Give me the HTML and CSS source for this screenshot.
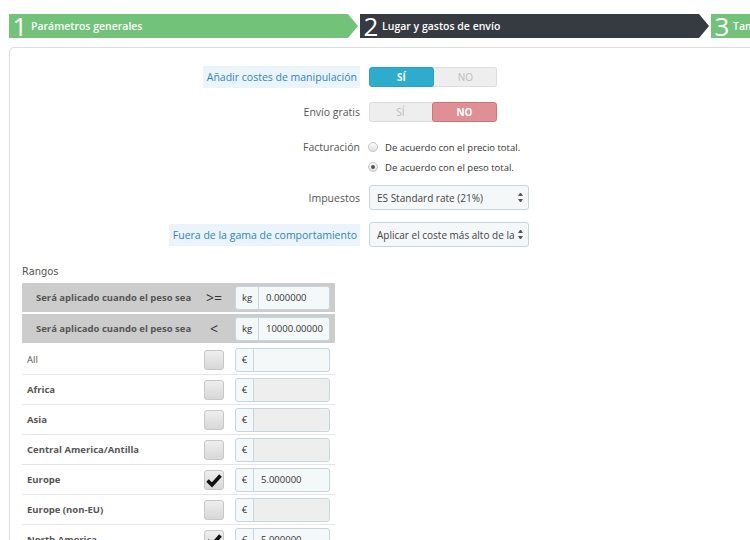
FILE: index.html
```html
<!DOCTYPE html>
<html lang="es">

<head>
    <meta charset="UTF-8">
    <meta name="viewport" content="width=device-width, initial-scale=1.0">
    <title>Transportista</title>
    <link rel="stylesheet" href="styles.css">
</head>

<body>
    <div class="wizard">
        <div class="steps">
            <div class="step done"><span class="num">1</span><span class="name">Parámetros generales</span></div>
            <div class="step current"><span class="num">2</span><span class="name">Lugar y gastos de envío</span></div>
            <div class="step done"><span class="num">3</span><span class="name">Tamaño, peso y grupo</span></div>
        </div>

        <div class="panel">
            <div class="form-group">
                <div class="label"><span class="hint">Añadir costes de manipulación</span></div>
                <div class="switch">
                    <span class="on yes">SÍ</span>
                    <span>NO</span>
                </div>
            </div>

            <div class="form-group">
                <div class="label">Envío gratis</div>
                <div class="switch">
                    <span>SÍ</span>
                    <span class="on no">NO</span>
                </div>
            </div>

            <div class="form-group radios">
                <div class="label">Facturación</div>
                <div class="radio-list">
                    <label class="radio"><span class="dot"></span>De acuerdo con el precio total.</label>
                    <label class="radio"><span class="dot checked"></span>De acuerdo con el peso total.</label>
                </div>
            </div>

            <div class="form-group tax">
                <div class="label">Impuestos</div>
                <div class="select">
                    <span class="value">ES Standard rate (21%)</span>
                    <span class="arrows"></span>
                </div>
            </div>

            <div class="form-group range">
                <div class="label"><span class="hint">Fuera de la gama de comportamiento</span></div>
                <div class="select">
                    <span class="value">Aplicar el coste más alto de la gama</span>
                    <span class="arrows"></span>
                </div>
            </div>

            <div class="ranges-title">Rangos</div>
            <table class="ranges">
                <colgroup>
                    <col class="c-name">
                    <col class="c-mid">
                    <col class="c-val">
                </colgroup>
                <tr class="head">
                    <td>Será aplicado cuando el peso sea</td>
                    <td class="op">&gt;=</td>
                    <td><div class="group"><span class="addon kg">kg</span><span class="field">0.000000</span></div></td>
                </tr>
                <tr class="head">
                    <td>Será aplicado cuando el peso sea</td>
                    <td class="op">&lt;</td>
                    <td><div class="group"><span class="addon kg">kg</span><span class="field">10000.00000</span></div></td>
                </tr>
                <tr>
                    <td class="zone all">All</td>
                    <td><span class="check"></span></td>
                    <td><div class="group"><span class="addon">€</span><span class="field"></span></div></td>
                </tr>
                <tr>
                    <td class="zone">Africa</td>
                    <td><span class="check"></span></td>
                    <td><div class="group"><span class="addon">€</span><span class="field off"></span></div></td>
                </tr>
                <tr>
                    <td class="zone">Asia</td>
                    <td><span class="check"></span></td>
                    <td><div class="group"><span class="addon">€</span><span class="field off"></span></div></td>
                </tr>
                <tr>
                    <td class="zone">Central America/Antilla</td>
                    <td><span class="check"></span></td>
                    <td><div class="group"><span class="addon">€</span><span class="field off"></span></div></td>
                </tr>
                <tr>
                    <td class="zone">Europe</td>
                    <td><span class="check">
                        <svg viewBox="0 0 20 20" width="20" height="20"><path d="M3.5 10.5 L8 15 L16.5 5.5" fill="none" stroke="#111" stroke-width="3.6"/></svg>
                    </span></td>
                    <td><div class="group"><span class="addon">€</span><span class="field">5.000000</span></div></td>
                </tr>
                <tr>
                    <td class="zone">Europe (non-EU)</td>
                    <td><span class="check"></span></td>
                    <td><div class="group"><span class="addon">€</span><span class="field off"></span></div></td>
                </tr>
                <tr>
                    <td class="zone">North America</td>
                    <td><span class="check">
                        <svg viewBox="0 0 20 20" width="20" height="20"><path d="M3.5 10.5 L8 15 L16.5 5.5" fill="none" stroke="#111" stroke-width="3.6"/></svg>
                    </span></td>
                    <td><div class="group"><span class="addon">€</span><span class="field">5.000000</span></div></td>
                </tr>
            </table>
        </div>
    </div>
</body>

</html>
```

FILE: styles.css
```css
body {
    margin: 0;
    overflow: hidden;
    font-family: "Open Sans", "DejaVu Sans", sans-serif;
    font-size: 10.5px;
    color: #555;
    background: #fff;
}

.wizard {
    padding: 14px 0 0 9px;
    width: 1100px;
}

.steps {
    display: flex;
    gap: 2px;
    height: 24px;
}

.step {
    width: 349px;
    height: 24px;
    display: flex;
    align-items: center;
    color: #fff;
    clip-path: polygon(0 0, calc(100% - 10px) 0, 100% 50%, calc(100% - 10px) 100%, 0 100%);
}

.step.done {
    background: #72c279;
}

.step.current {
    background: #363a41;
}

.step .num {
    font-size: 26px;
    font-weight: 400;
    line-height: 24px;
    width: 22px;
    text-align: center;
}

.step .name {
    font-size: 10.5px;
    font-weight: 600;
}

.panel {
    margin-top: 9px;
    border: 1px solid #dcdcdc;
    border-radius: 5px;
    padding: 19px 0 40px 12px;
    box-shadow: 0 2px 0 rgba(0, 0, 0, 0.03);
}

.form-group {
    display: flex;
    align-items: center;
    margin-bottom: 15px;
}

.form-group .label {
    width: 338px;
    text-align: right;
    margin-right: 9px;
    font-size: 10.5px;
}

.hint {
    background: #eaf4fa;
    color: #2f86bd;
    padding: 4px 3px 4px 4px;
}

.switch {
    display: flex;
    width: 128px;
    height: 20px;
    border-radius: 3px;
    background: #eee;
    box-shadow: inset 0 0 0 1px #ddd;
    overflow: hidden;
}

.switch span {
    flex: 1;
    display: flex;
    align-items: center;
    justify-content: center;
    color: #bbb;
    font-size: 10px;
}

.switch .on {
    color: #fff;
    font-weight: 700;
    border-radius: 3px;
}

.switch .yes {
    background: #2eacce;
    border: 1px solid #27a1c2;
}

.switch .no {
    background: #e08f95;
    border: 1px solid #d07479;
}

.radios {
    align-items: flex-start;
    margin-bottom: 8px;
}

.radios .label {
    line-height: 20px;
}

.radio-list {
    display: flex;
    flex-direction: column;
}

.radio {
    display: flex;
    align-items: center;
    height: 20px;
    font-size: 9.5px;
    color: #333;
}

.radio .dot {
    width: 8px;
    height: 8px;
    border: 1px solid #c4c4c4;
    border-radius: 50%;
    background: linear-gradient(#fafafa, #e2e2e2);
    margin: 0 7px 0 -1px;
    display: flex;
    align-items: center;
    justify-content: center;
}

.radio .dot.checked::after {
    content: "";
    width: 4px;
    height: 4px;
    border-radius: 50%;
    background: #555;
}

.tax {
    margin-bottom: 12px;
}

.select {
    width: 160px;
    height: 25px;
    box-sizing: border-box;
    border: 1px solid #c7d6db;
    border-radius: 3px;
    background: #f5f8f9;
    display: flex;
    align-items: center;
    padding: 0 5px 0 7px;
    color: #444;
    font-size: 10px;
}

.select .value {
    flex: 1;
    white-space: nowrap;
    overflow: hidden;
}

.select .arrows {
    width: 5px;
    height: 9px;
    margin-left: 1px;
    display: flex;
    flex-direction: column;
    justify-content: space-between;
}

.select .arrows::before,
.select .arrows::after {
    content: "";
    border-left: 2.5px solid transparent;
    border-right: 2.5px solid transparent;
}

.select .arrows::before {
    border-bottom: 3.5px solid #555;
}

.select .arrows::after {
    border-top: 3.5px solid #555;
}

.range {
    margin-bottom: 18px;
}

.ranges-title {
    font-family: "DejaVu Sans Condensed", "DejaVu Sans", sans-serif;
    font-stretch: condensed;
    font-size: 11px;
    color: #555;
    margin-bottom: 5px;
}

.ranges {
    width: 313px;
    border-collapse: collapse;
    table-layout: fixed;
}

.c-name {
    width: 175px;
}

.c-mid {
    width: 38px;
}

.ranges td {
    padding: 0;
    height: 29px;
    border-bottom: 1px solid #e6e6e6;
}

.ranges td:first-child {
    padding-left: 5px;
}

.ranges td:nth-child(2) {
    padding-left: 7px;
}

.ranges tr.head td {
    background: #ccc;
    border-bottom: 2px solid #fff;
    font-weight: 700;
    font-size: 9.5px;
    color: #555;
}

.ranges tr.head td:first-child {
    padding-left: 14px;
}

.ranges tr.head td.op {
    font-size: 14px;
    font-weight: 400;
    color: #333;
    padding: 0 4px 0 0;
    text-align: center;
}

.ranges tr.head .group {
    font-weight: 400;
}

.zone {
    font-weight: 700;
    font-size: 9.5px;
}

.zone.all {
    font-weight: 400;
}

.check {
    display: inline-block;
    vertical-align: middle;
    width: 18px;
    height: 18px;
    border: 1px solid #c7c7c7;
    border-radius: 3px;
    background: linear-gradient(#eee, #d8d8d8);
}

.check svg {
    display: block;
    margin: -1px 0 0 -1px;
}

.group {
    display: flex;
    width: 95px;
    height: 24px;
    box-sizing: border-box;
    border: 1px solid #c7d6db;
    border-radius: 3px;
    background: #f5f8f9;
    overflow: hidden;
    font-size: 9.5px;
    color: #333;
}

.addon {
    width: 17px;
    display: flex;
    align-items: center;
    justify-content: center;
    border-right: 1px solid #c7d6db;
}

.addon.kg {
    width: 22px;
}

.field {
    flex: 1;
    display: flex;
    align-items: center;
    padding-left: 7px;
}

.field.off {
    background: #eee;
}
```
